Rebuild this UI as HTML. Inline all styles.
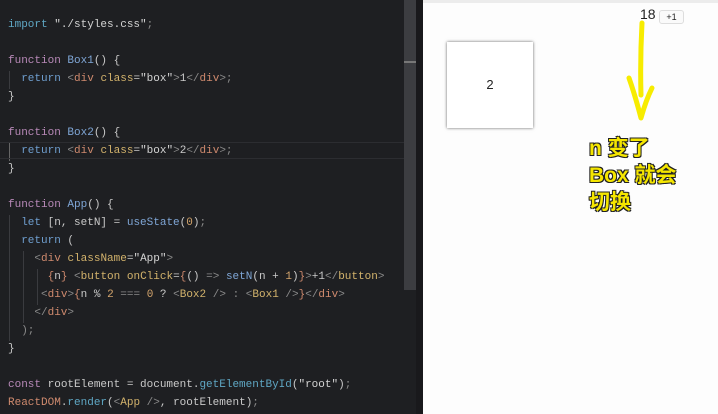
<!DOCTYPE html>
<html><head><meta charset="utf-8"><style>
*{margin:0;padding:0;box-sizing:border-box}
body{width:718px;height:414px;overflow:hidden;background:#1e1f22;position:relative;font-family:"Liberation Mono",monospace}
.code{position:absolute;left:8px;top:16px;font-size:11px;line-height:18px;color:#c9c9c9;white-space:pre}
.k{color:#b889b8}.f{color:#7fa6d6}.t{color:#cf8a6e}.a{color:#d3b36c}.s{color:#d4d4d4}.r{color:#6f9fd0}.n{color:#d3a46c}.p{color:#8a8a8a}.m{color:#5fa7c4}
.guide{position:absolute;width:1px;background:#3a3b3f}
#sb{position:absolute;left:404px;top:0;width:12px;height:290px;background:#3c3d41}
#sbl{position:absolute;left:404px;top:61px;width:12px;height:2px;background:#777}
#div{position:absolute;left:416px;top:0;width:7px;height:414px;background:#19191c}
#right{position:absolute;left:423px;top:0;width:295px;height:414px;background:#fdfdfd}
#top{position:absolute;left:423px;top:0;width:295px;height:3px;background:#ececec}
.box{position:absolute;left:447px;top:42px;width:86px;height:86px;background:#fff;box-shadow:0 0 3px rgba(0,0,0,.6);font:13px "Liberation Sans",sans-serif;text-align:center;line-height:86px;color:#222}
.cnt{position:absolute;left:640px;top:6px;font:14px "Liberation Sans",sans-serif;color:#222}
.btn{position:absolute;left:659px;top:10px;width:25px;height:14px;border:1px solid #ddd;border-radius:3px;background:#fafafa;font:9px "Liberation Sans",sans-serif;text-align:center;line-height:12px;color:#222}
.note{position:absolute;left:589px;top:135px;font:bold 21px/27px "Liberation Sans","Noto Sans CJK SC",sans-serif;color:#f5e600;text-shadow:-1px -1px 0 #222,1px -1px 0 #222,-1px 1px 0 #222,1px 1px 0 #222}
</style></head><body>
<div class="guide" style="left:9px;top:71px;height:18px"></div>
<div class="guide" style="left:9px;top:143px;height:18px;background:#666"></div>
<div class="guide" style="left:9px;top:215px;height:126px"></div>
<div class="guide" style="left:23px;top:251px;height:72px"></div>
<div class="guide" style="left:37px;top:269px;height:36px"></div>
<div style="position:absolute;left:0;top:142px;width:404px;height:1px;background:#2c2d31"></div>
<div style="position:absolute;left:0;top:158px;width:404px;height:1px;background:#2c2d31"></div>
<div class="code"><span class="m">import</span> <span class="s">"./styles.css"</span><span class="p">;</span>

<span class="k">function</span> <span class="f">Box1</span>() {
  <span class="r">return</span> <span class="p">&lt;</span><span class="t">div</span> <span class="a">class</span>=<span class="s">"box"</span><span class="p">&gt;</span>1<span class="p">&lt;/</span><span class="t">div</span><span class="p">&gt;;</span>
}

<span class="k">function</span> <span class="f">Box2</span>() {
  <span class="r">return</span> <span class="p">&lt;</span><span class="t">div</span> <span class="a">class</span>=<span class="s">"box"</span><span class="p">&gt;</span>2<span class="p">&lt;/</span><span class="t">div</span><span class="p">&gt;;</span>
}

<span class="k">function</span> <span class="f">App</span>() {
  <span class="r">let</span> [n, setN] = <span class="f">useState</span>(<span class="n">0</span>)<span class="p">;</span>
  <span class="r">return</span> (
    <span class="p">&lt;</span><span class="t">div</span> <span class="a">className</span>=<span class="s">"App"</span><span class="p">&gt;</span>
      <span class="t">{</span>n<span class="t">}</span> <span class="p">&lt;</span><span class="a">button</span> <span class="a">onClick</span>=<span class="t">{</span>() <span class="p">=&gt;</span> <span class="f">setN</span>(n + <span class="n">1</span>)<span class="t">}</span><span class="p">&gt;</span>+1<span class="p">&lt;/</span><span class="a">button</span><span class="p">&gt;</span>
     <span class="p">&lt;</span><span class="t">div</span><span class="p">&gt;</span><span class="t">{</span>n % <span class="n">2</span> <span class="p">===</span> <span class="n">0</span> ? <span class="p">&lt;</span><span class="a">Box2</span> <span class="p">/&gt;</span> <span class="p">:</span> <span class="p">&lt;</span><span class="a">Box1</span> <span class="p">/&gt;</span><span class="t">}</span><span class="p">&lt;/</span><span class="t">div</span><span class="p">&gt;</span>
    <span class="p">&lt;/</span><span class="t">div</span><span class="p">&gt;</span>
  <span class="p">);</span>
}

<span class="k">const</span> rootElement = document.<span class="m">getElementById</span>(<span class="s">"root"</span>)<span class="p">;</span>
<span class="t">ReactDOM</span>.<span class="m">render</span>(<span class="p">&lt;</span><span class="a">App</span> <span class="p">/&gt;</span>, rootElement)<span class="p">;</span></div>
<div id="sb"></div><div id="sbl"></div><div id="div"></div>
<div id="right"></div><div id="top"></div>
<div class="box">2</div>
<div class="cnt">18</div>
<div class="btn">+1</div>
<svg style="position:absolute;left:620px;top:20px" width="50" height="105" viewBox="0 0 50 105">
<path d="M22 3 Q20 40 21 75 M9 58 Q15 75 21 98 Q26 80 32 68" fill="none" stroke="#f7ec00" stroke-width="5" stroke-linecap="round" stroke-linejoin="round"/>
</svg>
<div class="note">n 变了<br>Box 就会<br>切换</div>
</body></html>
